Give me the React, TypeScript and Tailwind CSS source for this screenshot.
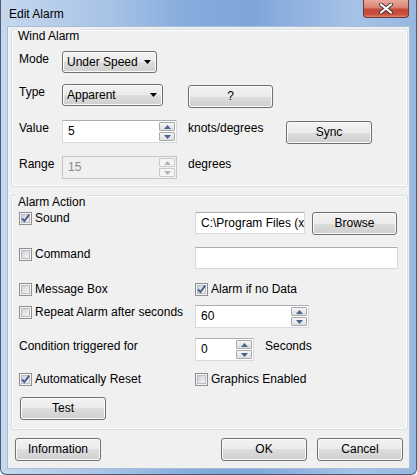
import { useId } from 'react';

const FONT = "font-['Liberation_Sans',Arial,sans-serif]";
const BTN_BG =
  'border border-[#707070] rounded-[3px] bg-[linear-gradient(#f2f2f2_0%,#ebebeb_50%,#dddddd_50%,#cfcfcf_100%)] shadow-[inset_0_0_0_1px_#fafafa]';

function Button({ label, className = '' }: { label: string; className?: string }) {
  return (
    <button type="button" className={`h-[23px] shrink-0 flex items-center justify-center ${BTN_BG} ${className}`}>
      {label}
    </button>
  );
}

function Combo({ value, className = '' }: { value: string; className?: string }) {
  return (
    <div className={`h-[22px] shrink-0 flex items-center pl-[4px] pr-[5px] ${BTN_BG} ${className}`}>
      <span className="flex-1">{value}</span>
      <svg width="7" height="4" viewBox="0 0 7 4">
        <path d="M0 0h7L3.5 4z" fill="#000" />
      </svg>
    </div>
  );
}

function TextBox({ value = '', className = '' }: { value?: string; className?: string }) {
  return (
    <div
      className={`h-[22px] shrink-0 flex items-center overflow-hidden whitespace-nowrap pl-[5px] bg-white border border-[#d7dbe1] border-t-[#abadb3] ${className}`}
    >
      {value}
    </div>
  );
}

function SpinBtn({ up, disabled }: { up?: boolean; disabled?: boolean }) {
  return (
    <div
      className={`flex-1 flex items-center justify-center border rounded-[1px] ${
        disabled
          ? 'border-[#c9c9c9] bg-[#f4f4f4]'
          : 'border-[#a9a9a9] bg-[linear-gradient(#f5f5f5,#dedede)]'
      }`}
    >
      <svg width="7" height="4" viewBox="0 0 7 4">
        <path d={up ? 'M0 4h7L3.5 0z' : 'M0 0h7L3.5 4z'} fill={disabled ? '#b4b4b4' : '#4b6190'} />
      </svg>
    </div>
  );
}

function Spin({ value, className = '', disabled }: { value: string; className?: string; disabled?: boolean }) {
  return (
    <div
      className={`h-[23px] shrink-0 flex border ${
        disabled ? 'bg-[#f0f0f0] border-[#c3c6cb] text-[#8a8a8a]' : 'bg-white border-[#d7dbe1] border-t-[#abadb3]'
      } ${className}`}
    >
      <span className="flex-1 flex items-center pl-[5px]">{value}</span>
      <div className="w-[17px] flex flex-col gap-px py-px pr-px">
        <SpinBtn up disabled={disabled} />
        <SpinBtn disabled={disabled} />
      </div>
    </div>
  );
}

function Check({ checked, label, className = '' }: { checked?: boolean; label: string; className?: string }) {
  const id = useId();
  return (
    <div className={`h-[13px] flex items-center gap-[3px] whitespace-nowrap ${className}`}>
      <svg width="13" height="13" viewBox="0 0 13 13" className="shrink-0">
        <defs>
          <linearGradient id={id} x1="0" y1="0" x2="1" y2="1">
            <stop offset="0" stopColor="#cbcfd5" />
            <stop offset="1" stopColor="#f7f7f7" />
          </linearGradient>
        </defs>
        <rect x="0.5" y="0.5" width="12" height="12" fill="#f4f4f4" stroke="#8e8f8f" />
        <rect x="2.5" y="2.5" width="8" height="8" fill={`url(#${id})`} stroke="#b9bdc3" />
        {checked && (
          <path d="M3 6.3 L5.4 9 L10.2 2.6" fill="none" stroke="#445a8e" strokeWidth="1.8" />
        )}
      </svg>
      <span>{label}</span>
    </div>
  );
}

function GroupLabel({ text }: { text: string }) {
  return <span className="-mt-px ml-[4px] px-[2px] w-fit h-[15px] bg-[#f0f0f0]">{text}</span>;
}

export default function App() {
  return (
    <div
      className={`${FONT} text-[12px] leading-[15px] text-black w-[417px] h-[475px] flex flex-col border-x border-b border-[#4a5c72] rounded-b-[6px] bg-[linear-gradient(90deg,#c5d8ee_0%,#a9c4e6_25%,#85acdc_45%,#7ea6d9_60%,#a6c2e7_85%,#97b7e0_100%)]`}
    >
      {/* title bar */}
      <div className="h-[27px] flex items-start justify-between">
        <span className="pl-[8px] pt-[7px]">Edit Alarm</span>
        <div className="mr-[7px] w-[46px] h-[18px] flex items-center justify-center rounded-b-[4px] border border-t-0 border-[#6b3a36] bg-[linear-gradient(#e9a99c_0%,#d98473_45%,#c54a3a_55%,#c8503e_85%,#dd8a70_100%)]">
          <svg width="16" height="11" viewBox="0 0 16 11">
            <path d="M3 1.5 L13 9.5 M13 1.5 L3 9.5" stroke="#4a3030" strokeWidth="4" strokeLinecap="round" />
            <path d="M3 1.5 L13 9.5 M13 1.5 L3 9.5" stroke="#ffffff" strokeWidth="2.2" strokeLinecap="round" />
          </svg>
        </div>
      </div>

      {/* client area */}
      <div className="mx-[7px] h-[441px] bg-[#f0f0f0] shadow-[0_0_0_1px_#a9bdd6] flex flex-col">
        {/* Wind Alarm */}
        <div className="ml-[3px] mt-[2px] w-[397px] h-[158px] border border-[#d5dfe5] rounded-[3px] shadow-[inset_0_0_0_1px_#ffffff] flex flex-col">
          <GroupLabel text="Wind Alarm" />

          <div className="mt-[7px] h-[22px] pl-[7px] flex items-start">
            <span className="w-[43px] pt-px">Mode</span>
            <Combo value="Under Speed" className="w-[95px]" />
          </div>

          <div className="mt-[11px] h-[22px] pl-[7px] flex items-start">
            <span className="w-[43px] pt-px">Type</span>
            <Combo value="Apparent" className="w-[101px]" />
            <Button label="?" className="ml-[25px] mt-px w-[85px]" />
          </div>

          <div className="mt-[14px] h-[23px] pl-[7px] flex items-start">
            <span className="w-[43px] pt-px">Value</span>
            <Spin value="5" className="w-[115px]" />
            <span className="ml-[11px] w-[98px] pt-px">knots/degrees</span>
            <Button label="Sync" className="mt-px w-[86px]" />
          </div>

          <div className="mt-[13px] h-[23px] pl-[7px] flex items-start">
            <span className="w-[43px] pt-px">Range</span>
            <Spin value="15" disabled className="w-[115px]" />
            <span className="ml-[11px] pt-px">degrees</span>
          </div>
        </div>

        {/* Alarm Action */}
        <div className="ml-[3px] mt-[8px] w-[397px] h-[235px] border border-[#d5dfe5] rounded-[3px] shadow-[inset_0_0_0_1px_#ffffff] flex flex-col">
          <GroupLabel text="Alarm Action" />

          <div className="mt-[2px] h-[23px] pl-[7px] flex items-start">
            <Check checked label="Sound" className="w-[176px]" />
            <TextBox value="C:\Program Files (x" className="w-[110px]" />
            <Button label="Browse" className="ml-[7px] w-[85px]" />
          </div>

          <div className="mt-[12px] h-[22px] pl-[7px] flex items-start">
            <Check label="Command" className="w-[176px] mt-px" />
            <TextBox className="w-[203px]" />
          </div>

          <div className="mt-[14px] h-[13px] pl-[7px] flex items-start">
            <Check label="Message Box" className="w-[176px]" />
            <Check checked label="Alarm if no Data" />
          </div>

          <div className="mt-[9px] h-[22px] pl-[7px] flex items-start">
            <Check label="Repeat Alarm after seconds" className="w-[176px] mt-px" />
            <Spin value="60" className="w-[114px] h-[22px]" />
          </div>

          <div className="mt-[11px] h-[22px] pl-[7px] flex items-start">
            <span className="w-[176px] pt-px">Condition triggered for</span>
            <Spin value="0" className="w-[59px] h-[22px]" />
            <span className="ml-[11px] pt-px">Seconds</span>
          </div>

          <div className="mt-[13px] h-[13px] pl-[7px] flex items-start">
            <Check checked label="Automatically Reset" className="w-[176px]" />
            <Check label="Graphics Enabled" />
          </div>

          <Button label="Test" className="mt-[11px] ml-[8px] w-[86px]" />
        </div>

        {/* dialog buttons */}
        <div className="mt-[8px] pl-[7px] flex items-start">
          <Button label="Information" className="w-[86px]" />
          <Button label="OK" className="ml-[120px] w-[86px]" />
          <Button label="Cancel" className="ml-[10px] w-[86px]" />
        </div>
      </div>
    </div>
  );
}
